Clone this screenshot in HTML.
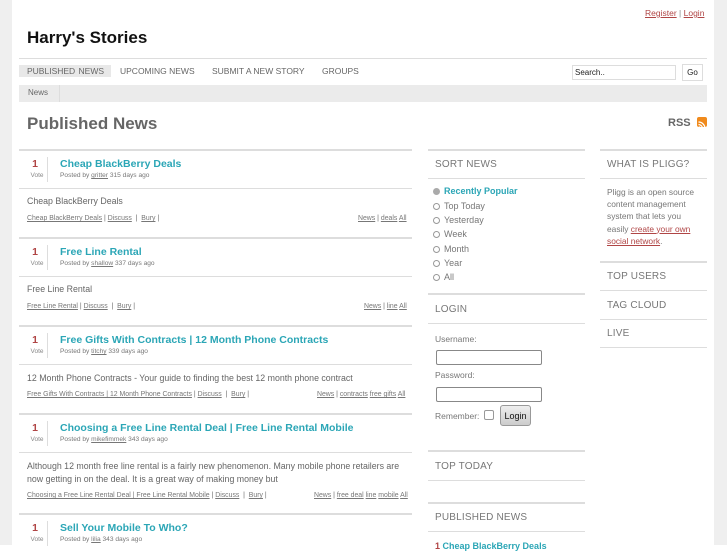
<!DOCTYPE html>
<html><head><meta charset="utf-8"><style>
*{margin:0;padding:0;box-sizing:border-box}
body{width:727px;height:545px;overflow:hidden;background:#fff;font-family:"Liberation Sans",sans-serif;color:#666;position:relative}
.a{position:absolute;white-space:nowrap}
.hl{position:absolute;height:1px;background:#ddd}
.strip{position:absolute;top:0;height:545px;background:#efefef}
.t{font-size:10.5px;font-weight:bold;color:#2ba6b6}
.v{font-size:10.5px;font-weight:bold;color:#b04545;width:30px;text-align:center}
.vl{font-size:6.5px;color:#888;width:30px;text-align:center}
.vb{position:absolute;width:1px;height:25px;background:#ddd}
.p{font-size:6.6px;color:#777}
.p u,.l u{color:#777}
.d{font-size:8.8px;color:#666}
.l{font-size:6.9px;color:#666}
.h{font-size:10px;color:#777;letter-spacing:.2px}
.s{font-size:9px;color:#777}
.r{display:inline-block;width:7px;height:7px;border:1px solid #999;border-radius:50%;vertical-align:-1px;margin-right:4px}
.inp{position:absolute;border:1px solid #888;border-radius:2px;background:#fff;height:15px}
</style></head><body>
<div class="strip" style="left:0;width:12px"></div>
<div class="strip" style="left:714px;width:13px"></div>
<div class="a" style="left:645px;top:8px;font-size:8.5px;color:#b04545"><u>Register</u> <span style="color:#888">|</span> <u>Login</u></div>
<div class="a" style="left:27px;top:28px;font-size:17px;font-weight:bold;color:#111">Harry's Stories</div>
<div class="hl" style="left:19px;width:688px;top:58px"></div>
<div class="a" style="left:19px;top:65px;width:92px;height:12px;background:#e8e8e8"></div>
<div class="a" style="left:27px;top:66px;font-size:8.5px;color:#666;word-spacing:1px">PUBLISHED NEWS</div>
<div class="a" style="left:120px;top:66px;font-size:8.5px;color:#666">UPCOMING NEWS</div>
<div class="a" style="left:212px;top:66px;font-size:8.5px;color:#666">SUBMIT A NEW STORY</div>
<div class="a" style="left:322px;top:66px;font-size:8.5px;color:#666">GROUPS</div>
<div class="a" style="left:572px;top:65px;width:104px;height:15px;border:1px solid #ddd;font-size:8px;color:#222;padding:2px 2px">Search..</div>
<div class="a" style="left:682px;top:64px;width:21px;height:17px;border:1px solid #ddd;font-size:8px;color:#222;text-align:center;padding-top:3px">Go</div>
<div class="a" style="left:19px;top:85px;width:688px;height:17px;background:#ebebeb"></div>
<div class="a" style="left:19px;top:85px;width:41px;height:17px;border-right:1px solid #ddd;font-size:8px;color:#666;padding:3px 0 0 9px">News</div>
<div class="a" style="left:27px;top:114px;font-size:17px;font-weight:bold;color:#666">Published News</div>
<div class="a" style="left:668px;top:117px;font-size:11px;font-weight:bold;color:#666">RSS</div>
<div class="a" style="left:697px;top:117px;width:10px;height:10px;background:#f08a1c;border-radius:2px"><svg width="10" height="10" viewBox="0 0 10 10"><circle cx="2.5" cy="7.5" r="1.1" fill="#fff"/><path d="M1.5 4.5a4 4 0 0 1 4 4M1.5 2a6.5 6.5 0 0 1 6.5 6.5" stroke="#fff" stroke-width="1.2" fill="none"/></svg></div>

<div class="hl" style="left:19px;width:393px;top:149px;height:2px;background:#ddd"></div>

<div class="a v" style="left:20px;top:158px">1</div><div class="a vl" style="left:22px;top:172px">Vote</div><div class="vb" style="left:47px;top:157px"></div>
<div class="a t" style="left:60px;top:158px">Cheap BlackBerry Deals</div>
<div class="a p" style="left:60px;top:172px">Posted by <u>gritter</u> 315 days ago</div>
<div class="hl" style="left:19px;width:393px;top:188px"></div>
<div class="a d" style="left:27px;top:196px">Cheap BlackBerry Deals</div>
<div class="a l" style="left:27px;top:215px"><u>Cheap BlackBerry Deals</u> | <u>Discuss</u> &nbsp;| &nbsp;<u>Bury</u> |</div>
<div class="a l" style="left:358px;top:215px"><u>News</u> | <u>deals</u> <u>All</u></div>
<div class="hl" style="left:19px;width:393px;top:237px;height:2px"></div>

<div class="a v" style="left:20px;top:246px">1</div><div class="a vl" style="left:22px;top:260px">Vote</div><div class="vb" style="left:47px;top:245px"></div>
<div class="a t" style="left:60px;top:246px">Free Line Rental</div>
<div class="a p" style="left:60px;top:260px">Posted by <u>shallow</u> 337 days ago</div>
<div class="hl" style="left:19px;width:393px;top:276px"></div>
<div class="a d" style="left:27px;top:284px">Free Line Rental</div>
<div class="a l" style="left:27px;top:303px"><u>Free Line Rental</u> | <u>Discuss</u> &nbsp;| &nbsp;<u>Bury</u> |</div>
<div class="a l" style="left:364px;top:303px"><u>News</u> | <u>line</u> <u>All</u></div>
<div class="hl" style="left:19px;width:393px;top:325px;height:2px"></div>

<div class="a v" style="left:20px;top:334px">1</div><div class="a vl" style="left:22px;top:348px">Vote</div><div class="vb" style="left:47px;top:333px"></div>
<div class="a t" style="left:60px;top:334px">Free Gifts With Contracts | 12 Month Phone Contracts</div>
<div class="a p" style="left:60px;top:348px">Posted by <u>titchy</u> 339 days ago</div>
<div class="hl" style="left:19px;width:393px;top:364px"></div>
<div class="a d" style="left:27px;top:373px">12 Month Phone Contracts - Your guide to finding the best 12 month phone contract</div>
<div class="a l" style="left:27px;top:391px"><u>Free Gifts With Contracts | 12 Month Phone Contracts</u> | <u>Discuss</u> &nbsp;| &nbsp;<u>Bury</u> |</div>
<div class="a l" style="left:317px;top:391px"><u>News</u> | <u>contracts</u> <u>free gifts</u> <u>All</u></div>
<div class="hl" style="left:19px;width:393px;top:413px;height:2px"></div>

<div class="a v" style="left:20px;top:422px">1</div><div class="a vl" style="left:22px;top:436px">Vote</div><div class="vb" style="left:47px;top:421px"></div>
<div class="a t" style="left:60px;top:422px">Choosing a Free Line Rental Deal | Free Line Rental Mobile</div>
<div class="a p" style="left:60px;top:436px">Posted by <u>mikefimmek</u> 343 days ago</div>
<div class="hl" style="left:19px;width:393px;top:452px"></div>
<div class="a d" style="left:27px;top:460px;line-height:12.5px">Although 12 month free line rental is a fairly new phenomenon. Many mobile phone retailers are<br>now getting in on the deal. It is a great way of making money but</div>
<div class="a l" style="left:27px;top:492px"><u>Choosing a Free Line Rental Deal | Free Line Rental Mobile</u> | <u>Discuss</u> &nbsp;| &nbsp;<u>Bury</u> |</div>
<div class="a l" style="left:314px;top:492px"><u>News</u> | <u>free deal</u> <u>line</u> <u>mobile</u> <u>All</u></div>
<div class="hl" style="left:19px;width:393px;top:513px;height:2px"></div>

<div class="a v" style="left:20px;top:522px">1</div><div class="a vl" style="left:22px;top:536px">Vote</div><div class="vb" style="left:47px;top:521px"></div>
<div class="a t" style="left:60px;top:522px">Sell Your Mobile To Who?</div>
<div class="a p" style="left:60px;top:536px">Posted by <u>lilia</u> 343 days ago</div>

<div class="hl" style="left:428px;width:157px;top:149px;height:2px"></div>
<div class="a h" style="left:435px;top:159px">SORT NEWS</div>
<div class="hl" style="left:428px;width:157px;top:178px"></div>
<div class="a s" style="left:433px;top:186px;color:#2ba6b6;font-weight:bold"><span class="r" style="background:#aaa;border-color:#aaa"></span>Recently Popular</div>
<div class="a s" style="left:433px;top:201px"><span class="r"></span>Top Today</div>
<div class="a s" style="left:433px;top:215px"><span class="r"></span>Yesterday</div>
<div class="a s" style="left:433px;top:229px"><span class="r"></span>Week</div>
<div class="a s" style="left:433px;top:244px"><span class="r"></span>Month</div>
<div class="a s" style="left:433px;top:258px"><span class="r"></span>Year</div>
<div class="a s" style="left:433px;top:272px"><span class="r"></span>All</div>
<div class="hl" style="left:428px;width:157px;top:293px;height:2px"></div>
<div class="a h" style="left:435px;top:304px">LOGIN</div>
<div class="hl" style="left:428px;width:157px;top:323px"></div>
<div class="a s" style="left:435px;top:334px;font-size:8.5px">Username:</div>
<div class="inp" style="left:436px;top:350px;width:106px"></div>
<div class="a s" style="left:435px;top:370px;font-size:8.5px">Password:</div>
<div class="inp" style="left:436px;top:387px;width:106px"></div>
<div class="a s" style="left:435px;top:411px;font-size:8.5px">Remember:</div>
<div class="a" style="left:484px;top:410px;width:10px;height:10px;border:1px solid #999;border-radius:2px"></div>
<div class="a" style="left:500px;top:405px;width:31px;height:21px;border:1px solid #999;border-radius:3px;background:linear-gradient(#eee,#ccc);font-size:9px;color:#111;text-align:center;padding-top:5px">Login</div>
<div class="hl" style="left:428px;width:157px;top:450px;height:2px"></div>
<div class="a h" style="left:435px;top:461px">TOP TODAY</div>
<div class="hl" style="left:428px;width:157px;top:480px"></div>
<div class="hl" style="left:428px;width:157px;top:502px;height:2px"></div>
<div class="a h" style="left:435px;top:512px">PUBLISHED NEWS</div>
<div class="hl" style="left:428px;width:157px;top:531px"></div>
<div class="a t" style="left:435px;top:541px;font-size:9px"><span style="color:#b04545">1</span> Cheap BlackBerry Deals</div>

<div class="hl" style="left:600px;width:107px;top:149px;height:2px"></div>
<div class="a h" style="left:607px;top:159px">WHAT IS PLIGG?</div>
<div class="hl" style="left:600px;width:107px;top:178px"></div>
<div class="a" style="left:607px;top:186px;font-size:8.4px;line-height:12.2px;color:#777">Pligg is an open source<br>content management<br>system that lets you<br>easily <u style="color:#b04545">create your own</u><br><u style="color:#b04545">social network</u>.</div>
<div class="hl" style="left:600px;width:107px;top:261px;height:2px"></div>
<div class="a h" style="left:607px;top:271px">TOP USERS</div>
<div class="hl" style="left:600px;width:107px;top:290px"></div>
<div class="a h" style="left:607px;top:300px">TAG CLOUD</div>
<div class="hl" style="left:600px;width:107px;top:319px"></div>
<div class="a h" style="left:607px;top:328px">LIVE</div>
<div class="hl" style="left:600px;width:107px;top:347px"></div>
</body></html>
